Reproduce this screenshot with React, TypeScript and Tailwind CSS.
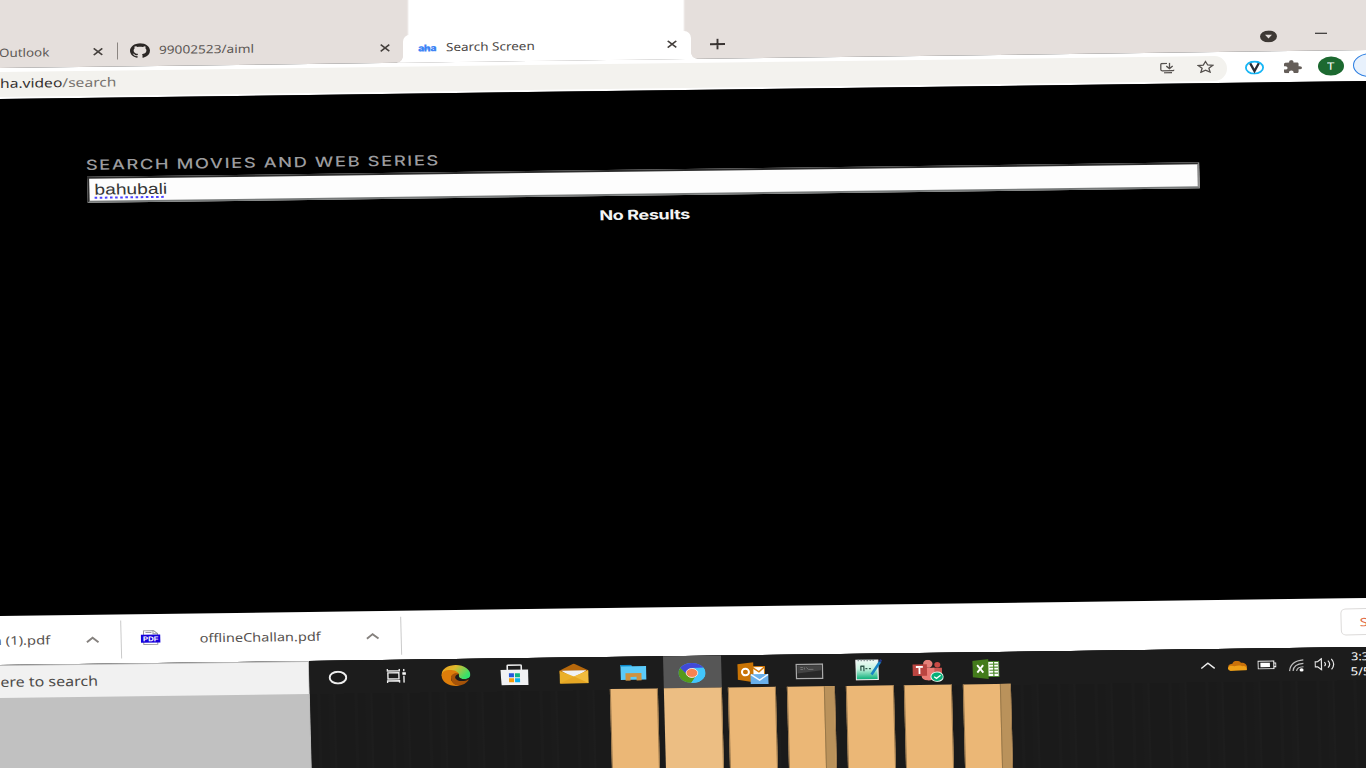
import { useLayoutEffect, useRef, useState } from 'react';
import type { ReactNode } from 'react';

const UI = "font-['Noto_Sans','Open_Sans',sans-serif]";

/** Text stretched horizontally so that it fills exactly `width` pixels. */
function Fit({ width, className = '', children }: { width: number; className?: string; children: ReactNode }) {
  const ref = useRef<HTMLSpanElement>(null);
  const [scale, setScale] = useState(1);
  useLayoutEffect(() => {
    if (ref.current) setScale(width / ref.current.offsetWidth);
  }, [width]);
  return (
    <span className={`block shrink-0 whitespace-nowrap ${className}`} style={{ width }}>
      <span ref={ref} className="inline-block origin-left" style={{ transform: `scaleX(${scale})` }}>
        {children}
      </span>
    </span>
  );
}

function Svg({ box, className, children }: { box: string; className: string; children: ReactNode }) {
  return (
    <svg viewBox={box} preserveAspectRatio="none" fill="none" className={`block shrink-0 ${className}`}>
      {children}
    </svg>
  );
}

function Close({ className = '' }: { className?: string }) {
  return (
    <Svg box="0 0 10 8" className={`h-2 w-2.5 ${className}`}>
      <path d="M.7.7l8.6 6.600M9.300.7L.7 7.300" stroke="#45403d" strokeWidth="1.6" />
    </Svg>
  );
}

function Chevron({ className = '' }: { className?: string }) {
  return (
    <Svg box="0 0 14 8" className={`h-2 w-3.5 ${className}`}>
      <path d="M1.2 6.5L7 2l5.8 4.5" stroke="currentColor" strokeWidth="1.9" />
    </Svg>
  );
}

function TabStrip() {
  return (
    <div className={`flex h-[68px] w-[1400px] items-end bg-[#e5dfdc] text-[11.5px] leading-4 text-[#5c5754] ${UI}`}>
      <div className="flex h-[31px] w-[117px] items-center">
        <Fit width={50} className="-ml-px">Outlook</Fit>
        <Close className="ml-11" />
      </div>
      <div className="flex h-[31px] w-[286px] items-center">
        <div className="h-[17px] w-px shrink-0 bg-[#8b8581]" />
        <Svg box="0 0 16 16" className="ml-3 h-[15px] w-5">
          <path
            fill="#2b2725"
            d="M8 0C3.58 0 0 3.58 0 8c0 3.54 2.29 6.53 5.47 7.59.4.07.55-.17.55-.38 0-.19-.01-.82-.01-1.49-2.01.37-2.53-.49-2.69-.94-.09-.23-.48-.94-.82-1.13-.28-.15-.68-.52-.01-.53.63-.01 1.08.58 1.23.82.72 1.21 1.87.87 2.33.66.07-.52.28-.87.51-1.07-1.78-.2-3.64-.89-3.64-3.95 0-.87.31-1.59.82-2.15-.08-.2-.36-1.02.08-2.12 0 0 .67-.21 2.2.82.64-.18 1.32-.27 2-.27.68 0 1.36.09 2 .27 1.53-1.04 2.2-.82 2.2-.82.44 1.1.16 1.92.08 2.12.51.56.82 1.27.82 2.15 0 3.07-1.87 3.75-3.65 3.95.29.25.54.73.54 1.48 0 1.07-.01 1.93-.01 2.2 0 .21.15.46.55.38A8.01 8.01 0 0 0 16 8c0-4.42-3.58-8-8-8z"
          />
        </Svg>
        <Fit width={95} className="mb-px ml-[9px]">99002523/aiml</Fit>
        <Close className="ml-[126px]" />
      </div>
      <div className="relative flex h-[68px] w-[288px] flex-col">
        <div className="mr-[8px] ml-[6px] h-11 bg-white shadow-[0_0_2px_1px_#fff]" />
        <div className="-mt-1 flex h-7 items-center rounded-t-[7px] bg-white pb-0.5 text-[#4a4644]">
          <Fit width={18} className="mt-0.5 ml-[15px] font-['Inter',sans-serif] text-[9.5px] font-black tracking-tighter text-[#3d84f5]">
            a<span className="line-through decoration-1">h</span>a
          </Fit>
          <Fit width={89} className="ml-2.5">Search Screen</Fit>
          <Close className="ml-[132px]" />
        </div>
        <span className="absolute bottom-0 -left-1.5 size-1.5 bg-[radial-gradient(circle_at_0_0,transparent_5.5px,#fff_6px)]" />
        <span className="absolute -right-1.5 bottom-0 size-1.5 bg-[radial-gradient(circle_at_100%_0,transparent_5.5px,#fff_6px)]" />
      </div>
      <div className="flex h-[31px] flex-1 items-center">
        <Svg box="0 0 15 11" className="mt-px ml-[19px] h-[11px] w-[15px]">
          <path d="M7.5 0v11M0 5.5h15" stroke="#393432" strokeWidth="1.9" />
        </Svg>
        <Svg box="0 0 17 12" className="ml-[535px] h-3 w-[17px]">
          <ellipse cx="8.5" cy="6" rx="8.5" ry="6" fill="#3e3935" />
          <path d="M5 4.3h7L8.5 8z" fill="#e5dfdc" />
        </Svg>
        <div className="mb-1 ml-[38px] h-px w-3 bg-[#111]" />
      </div>
    </div>
  );
}

function Toolbar() {
  return (
    <div className={`flex h-[31px] w-[1400px] items-center bg-white pt-px ${UI}`}>
      <div className="flex h-[25px] w-[1227px] items-center rounded-r-full bg-[#f3f2ee] text-[12.5px] leading-5 text-[#77736f]">
        <Fit width={116}>
          <span className="text-[#34302e]">ha.video</span>/search
        </Fit>
        <Svg box="0 0 15 11" className="mb-0.5 ml-[1044px] h-[11px] w-[15px]">
          <path d="M7 .7H2.2Q.8.7.8 2v4.8Q.8 8 2.2 8h10.6q1 0 1-1M9.5 0v5.5M6.3 3.4l3.2 2.5 3.2-2.5M4 10.1h8" stroke="#55514e" strokeWidth="1.3" />
        </Svg>
        <Svg box="0 0 17 13" className="mb-[3px] ml-[22px] h-[13px] w-[17px]">
          <path d="M8.5 1.3l2.2 3.5 5 .4-3.8 2.8 1.2 4-4.6-2.1L3.9 12l1.2-4L1.3 5.2l5-.4z" stroke="#55514e" strokeWidth="1.3" />
        </Svg>
      </div>
      <Svg box="0 0 19 14" className="mb-px ml-[18px] h-3.5 w-[19px]">
        <ellipse cx="9.5" cy="7" rx="8.6" ry="6.1" fill="#fff" stroke="#16b5f5" strokeWidth="1.8" />
        <path d="M5.2 2.8L9.500 10.5 13.800 2.800" stroke="#292d35" strokeWidth="2.3" />
      </Svg>
      <Svg box="2 1 21 21" className="mb-0.5 ml-[20px] h-[13px] w-[18px]">
        <path
          fill="#655e59"
          d="M20.5 11H19V7c0-1.100-.9-2-2-2h-4V3.500a2.500 2.500 0 0 0-5 0V5H4c-1.100 0-2 .9-2 2v3.800h1.500a2.700 2.700 0 0 1 0 5.400H2V20c0 1.100.9 2 2 2h3.800v-1.500a2.700 2.700 0 0 1 5.400 0V22H17c1.100 0 2-.9 2-2v-4h1.500a2.500 2.500 0 0 0 0-5z"
        />
      </Svg>
      <div className="mb-0.5 ml-4 flex h-[19px] w-[26px] shrink-0 items-center justify-center rounded-[50%] bg-[#1c6930] text-[10px] leading-none text-white">
        <Fit width={8}>T</Fit>
      </div>
      <div className="mb-0.5 ml-[9px] h-6 w-[34px] shrink-0 rounded-[50%] border border-[#2a7de1] bg-[#e8f1fc]" />
    </div>
  );
}

function SearchPage() {
  return (
    <div className="h-[517px] w-[1400px] bg-black">
      <div className="w-[1112px] origin-top-left translate-x-[85px] skew-x-[1.5deg] pt-[58px]">
        <Fit width={354} className="-ml-px font-['Inter',sans-serif] text-[14px] leading-[18px] font-medium tracking-[1.2px] text-[#9c9c9f]">
          SEARCH MOVIES AND WEB SERIES
        </Fit>
        <div className="mt-[3px] flex h-[26px] items-center border-2 border-t-[#2c2c2c] border-r-[#8b8b8b] border-b-[#777a7a] border-l-[#2c2c2c] bg-[#fdfdfd] pl-[5px]">
          <Fit width={73} className="font-['Liberation_Sans',sans-serif] text-[15px] leading-5 text-[#363636]">
            <span className="underline decoration-[#4a42ff] decoration-dotted decoration-2 underline-offset-[2px] [text-decoration-skip-ink:none]">bahubali</span>
          </Fit>
        </div>
        <Fit width={91} className="mt-[9px] ml-[511px] font-['Inter',sans-serif] text-[13.5px] leading-[21px] font-bold tracking-[-0.3px] text-[#f4f4f4]">
          No Results
        </Fit>
      </div>
    </div>
  );
}

function Downloads() {
  return (
    <div className="w-[1400px] bg-white">
      <div className={`flex h-[49px] origin-top-left skew-x-[1.5deg] items-center text-[12px] leading-4 text-[#57524f] ${UI}`}>
        <Fit width={58} className="-ml-2">n (1).pdf</Fit>
        <Chevron className="ml-[35px] text-[#85817e]" />
        <div className="ml-[21px] h-[38px] w-px shrink-0 bg-[#cacaca]" />
        <Svg box="0 0 20 15" className="mb-0.5 ml-[19px] h-[15px] w-5">
          <path d="M3 .6h10l4 3v10.800H3z" fill="#fff" stroke="#9a9aa0" />
          <path d="M5 2.500h6M12.500.8v3H17" stroke="#9a9aa0" />
          <path d="M.2 4.500h19.600v8.200H.2z" fill="#1500dc" />
          <text x="2.300" y="11.200" fontSize="6.800" fontWeight="bold" textLength="15.400" lengthAdjust="spacingAndGlyphs" fill="#fff" fontFamily="Liberation Sans, sans-serif">PDF</text>
        </Svg>
        <Fit width={121} className="ml-[39px]">offlineChallan.pdf</Fit>
        <Chevron className="ml-[45px] text-[#85817e]" />
        <div className="ml-[21px] h-[38px] w-px shrink-0 bg-[#cacaca]" />
        <div className="mb-0.5 ml-[939px] flex h-[27px] w-[90px] shrink-0 items-center rounded-[5px] border border-[#dcdad9] pl-[18px] text-[11.5px] text-[#e06a42]">
          <Fit width={8}>S</Fit>
        </div>
      </div>
    </div>
  );
}

function Cortana() {
  return (
    <Svg box="0 0 19 14" className="mt-px mr-1 h-3.5 w-[19px]">
      <ellipse cx="9.500" cy="7" rx="8.300" ry="5.900" stroke="#eee" strokeWidth="2" />
    </Svg>
  );
}

function TaskView() {
  return (
    <Svg box="0 0 20 14" className="mr-[5px] h-3.5 w-5">
      <path d="M1 0v2h12V0M1 14v-2h12v2M1.500 4h11v6h-11zM17.500 0v2.500M17.500 7v7" stroke="#ededed" strokeWidth="1.400" />
      <path d="M16 3.500h3.500v2.500H16z" fill="#fff" />
    </Svg>
  );
}

function Edge() {
  return (
    <Svg box="0 0 29 21" className="mr-0.5 h-[21px] w-[29px]">
      <defs>
        <linearGradient id="edgeTop" x1="0" y1="0" x2="1" y2=".5">
          <stop stopColor="#f19a16" />
          <stop offset=".45" stopColor="#dfba2e" />
          <stop offset="1" stopColor="#35e26b" />
        </linearGradient>
      </defs>
      <path d="M0 11C0 3 7 0 14.500 0 23 0 29 5 29 9.500c0 4-4 5-8 4.500-3-.3-4.500-1.500-3.500-3.500C18 9 15 6 11 6.500z" fill="url(#edgeTop)" />
      <path d="M0 10C1 5.500 6 4.500 10 5c4.500.5 7.500 2.500 7.800 5C15 7.500 10 9 9.500 13c-.3 4 4 7 8.500 7.800C8 22 0 17 0 10z" fill="#dd7d0a" />
      <path d="M9.500 12.500c0-3 3.500-5 7.800-4-1.800 3 1 7.500 10.200 6.200C24 20 17 22 13 19.500 10.500 18 9.500 15 9.500 12.500z" fill="#a65308" />
      <path d="M17.500 9c-2 .2-4.700 2.200-3.500 4.500 1.600 3 8.500 3.500 13 1.200-4 .3-11-.7-9.500-5.700z" fill="#1c1c1c" />
    </Svg>
  );
}

function Store() {
  return (
    <Svg box="0 0 28 21" className="mr-[3px] h-[21px] w-7">
      <path d="M7 7V1.500Q7 .8 8 .8h12q1 0 1 .7V7" stroke="#eee" strokeWidth="1.600" />
      <path d="M0 5.500h28V21H1z" fill="#f1f1f3" />
      <path d="M8.500 9h5v4h-5z" fill="#2457dd" />
      <path d="M14.500 9h5v4h-5z" fill="#0fb583" />
      <path d="M8.500 14h5v4h-5z" fill="#f59b09" />
      <path d="M14.500 14h5v4h-5z" fill="#08aff2" />
    </Svg>
  );
}

function Mail() {
  return (
    <Svg box="0 0 29 20" className="mr-0.5 h-5 w-[29px]">
      <path d="M0 7L14.500 0 29 7v3H0z" fill="#b5670b" />
      <path d="M2 7h25l-12.500 8z" fill="#eff1f5" />
      <path d="M0 7l14.500 6L29 7v13H0z" fill="#eab02a" />
      <path d="M14.500 13L29 7v13z" fill="#f0bb3d" />
      <path d="M0 20l14.500-7L29 20z" fill="#e6a724" />
    </Svg>
  );
}

function Explorer() {
  return (
    <Svg box="0 0 26 16" className="mr-px h-4 w-[26px]">
      <path d="M0 0h10l2 1.500h14V15H0z" fill="#5bcbfa" />
      <path d="M0 0h10l2 1.500H0z" fill="#0b88c9" />
      <path d="M5 8.500h16V16h-5v-3.800h-6V16H5z" fill="#ce9240" />
    </Svg>
  );
}

function Chrome() {
  return (
    <Svg box="0 0 27 20" className="mt-px mr-px h-5 w-[27px]">
      <ellipse cx="13.500" cy="10" rx="13.500" ry="10" fill="#42c5fb" />
      <path d="M2 4.800A13.500 10 0 0 1 25.200 5H13.500L8 12z" fill="#4149d8" />
      <path d="M2 4.800A13.500 10 0 0 0 12.500 20L18.500 12H9z" fill="#56991a" />
      <path d="M13.500 5h11.700A13.500 10 0 0 1 12.500 20L19 11z" fill="#42c5fb" />
      <ellipse cx="13.500" cy="10" rx="5.800" ry="4.500" fill="#f68250" stroke="#f8e9e3" strokeWidth=".9" />
    </Svg>
  );
}

function Outlook() {
  return (
    <Svg box="0 0 31 22" className="mt-[3px] ml-[3px] h-[22px] w-[31px]">
      <path d="M14 4.500h13V14H14z" fill="#fff" stroke="#d47a08" />
      <path d="M14.500 5l7 4.800L27 5" stroke="#d47a08" strokeWidth="1.500" />
      <path d="M0 1.800L16 0v20L0 17.300z" fill="#c97405" />
      <ellipse cx="8" cy="9.800" rx="3.500" ry="3.300" stroke="#fff" strokeWidth="2" />
      <path d="M13 12h18v10H13z" fill="#69afeb" />
      <path d="M13.500 12.500L22 18l8.500-5.500" stroke="#f4faff" strokeWidth="1.400" />
    </Svg>
  );
}

function Terminal() {
  return (
    <Svg box="0 0 28 16" className="mt-px mr-0.5 h-4 w-7">
      <path d="M.8.8h26.400v14.400H.8z" fill="#292929" stroke="#aaa" strokeWidth="1.400" />
      <path d="M2 2h24v5L2 10z" fill="#444" />
      <path d="M5 4h2.500M5 6h2.500M9 4v2M11 4l2 2h5" stroke="#777" strokeWidth=".9" />
    </Svg>
  );
}

function Editor() {
  return (
    <Svg box="0 0 27 22" className="mr-px h-[22px] w-[27px]">
      <defs>
        <linearGradient id="editorFill" x2="0" y2="1">
          <stop stopColor="#f1faf7" />
          <stop offset=".45" stopColor="#c5f3df" />
          <stop offset="1" stopColor="#05ae76" />
        </linearGradient>
      </defs>
      <path d="M.6 1.500h22v19.500H.6z" fill="url(#editorFill)" stroke="#eee" strokeWidth="1.200" />
      <path d="M3 .5v2M6 .5v2M9 .5v2M12 .5v2M15 .5v2M18 .5v2" stroke="#60797a" />
      <path d="M5.500 7v5M5.500 7.500h3v5M10 10h2M13.500 10h2" stroke="#31574d" strokeWidth="1.300" />
      <path d="M16 16L25 3" stroke="#1785c5" strokeWidth="2.600" />
      <path d="M24.500 3.500L26 1.200" stroke="#233886" strokeWidth="2.400" />
    </Svg>
  );
}

function Teams() {
  return (
    <Svg box="0 0 31 22" className="mt-[3px] ml-px h-[22px] w-[31px]">
      <ellipse cx="15.500" cy="4" rx="4.700" ry="4" fill="#e68079" />
      <ellipse cx="25" cy="5" rx="3" ry="2.700" fill="#c94a45" />
      <path d="M20 8h9.500v7.500Q28 19 22 18z" fill="#cc5752" />
      <path d="M9 8h13v9q-2 4-7 3.500Q9 20 9 16z" fill="#eb7c76" />
      <path d="M0 4.500h14.500V16H0z" fill="#bb4541" />
      <path d="M3.500 7h7M7 7v7" stroke="#fff" strokeWidth="1.800" />
      <ellipse cx="24.500" cy="17" rx="6.200" ry="4.700" fill="#08ae78" stroke="#e9f8f1" />
      <path d="M21.500 17l2.300 1.600 4.200-3" stroke="#fff" strokeWidth="1.300" />
    </Svg>
  );
}

function Excel() {
  return (
    <Svg box="0 0 27 20" className="mt-px mr-0.5 h-5 w-[27px]">
      <path d="M15 2.500h11.500v15H15z" fill="#fff" stroke="#48832b" />
      <path d="M17 5.200h8.500M17 8.200h8.500M17 11.200h8.500M17 14.200h8.500M21.300 3v14" stroke="#528e30" strokeWidth="1.200" />
      <path d="M0 1.800L16 0v20L0 18z" fill="#437b1b" />
      <path d="M4.800 6l6 7.500M10.800 6l-6 7.500" stroke="#fff" strokeWidth="1.900" />
    </Svg>
  );
}

type App = { icon: ReactNode; tile?: 'plain' | 'wide' | 'stacked' };

const apps: App[] = [
  { icon: <Cortana /> },
  { icon: <TaskView /> },
  { icon: <Edge /> },
  { icon: <Store /> },
  { icon: <Mail /> },
  { icon: <Explorer />, tile: 'plain' },
  { icon: <Chrome />, tile: 'wide' },
  { icon: <Outlook />, tile: 'plain' },
  { icon: <Terminal />, tile: 'stacked' },
  { icon: <Editor />, tile: 'plain' },
  { icon: <Teams />, tile: 'plain' },
  { icon: <Excel />, tile: 'stacked' },
];

function Tile({ kind }: { kind: 'plain' | 'wide' | 'stacked' }) {
  if (kind === 'wide') return <div className="h-28 w-[58px] border-r border-[#a58254] bg-[#ecbe83]" />;
  return (
    <div className="flex h-28 w-12 border-x border-[#97764b] bg-[#ebb776]">
      {kind === 'stacked' && <div className="ml-auto w-2.5 border-l border-[#987849] bg-[#ba925b]" />}
    </div>
  );
}

function Tray() {
  return (
    <div className="flex h-8 items-center text-white">
      <Svg box="0 0 15 7" className="h-[7px] w-[15px]">
        <path d="M.8 6.300l6.700-5.300 6.700 5.300" stroke="#ededed" strokeWidth="1.400" />
      </Svg>
      <Svg box="0 0 20 10" className="mt-px ml-3 h-2.5 w-5">
        <path d="M1 7C0 4 3 3 5 3 6-1 12-.5 13.500 2 17 1.500 20 4 19.500 7z" fill="#c9710a" />
        <path d="M.5 7C1 4.500 5 4.500 7 5.500c4-1.500 7-.5 8 0 3-1 5.500 2 4 4L3 10Q0 9.500.5 7z" fill="#eea018" />
      </Svg>
      <Svg box="0 0 19 9" className="mt-px ml-2.5 h-[9px] w-[19px]">
        <path d="M.6.600h15.800v7.800H.6zM17 2.700h1.500v3.600H17" stroke="#f2f2f2" strokeWidth="1.100" />
        <path d="M3 2.300h9.500v4.400H3z" fill="#fff" />
      </Svg>
      <Svg box="0 0 16 13" className="mt-0.5 ml-3 h-[13px] w-4">
        <path d="M1 12Q2 2 15 1M4.500 12Q5 5 15 4.500M8 12q.5-4 7-4.200" stroke="#bdbdbd" strokeWidth="1.200" />
        <ellipse cx="13" cy="11" rx="2" ry="1.600" fill="#fff" />
      </Svg>
      <Svg box="0 0 21 13" className="ml-2.5 h-[13px] w-[21px]">
        <path d="M.7 4h2.500L7 1v11L3.200 9H.7zM10 4.500q2 2 0 4M13.500 3q3.500 3.500 0 7M17 1.200q4.500 5.300 0 10.600" stroke="#e8e8e8" strokeWidth="1.200" />
      </Svg>
      <div className={`ml-[15px] shrink-0 text-[11px] leading-[15px] ${UI}`}>
        <Fit width={18} className="ml-px">3:3</Fit>
        <Fit width={20}>5/5</Fit>
      </div>
    </div>
  );
}

function Taskbar() {
  return (
    <div className="w-[1420px] bg-[#1c1c1c]">
      <div className="flex h-36 origin-top-left skew-x-[1.5deg] bg-[#1c1c1c]">
        <div className="-ml-3 w-[321px] shrink-0 border-t border-r border-[#b8b8b8] bg-[#c1c1c1]">
          <div className={`flex h-8 items-center bg-[#f1f1f1] pl-3 text-[13.5px] leading-5 text-[#4d4b49] ${UI}`}>
            <Fit width={97}>ere to search</Fit>
          </div>
        </div>
        <div className="flex flex-1 bg-[linear-gradient(#1c1c1c_33px,transparent_33px),repeating-linear-gradient(90deg,#1a1a1a_0_7px,#1c1c1c_8px_10px,#1a1a1a_11px_18px,#1b1b1b_19px_23px,#1d1d1d_24px_25px,#1a1a1a_26px_37px)] pl-px">
          {apps.map((app, i) => (
            <div key={i} className="flex w-[58.8px] shrink-0 flex-col items-center">
              <div className={`flex h-8 w-[58px] shrink-0 items-center justify-center ${app.tile === 'wide' ? 'bg-[#565656]' : ''}`}>
                {app.icon}
              </div>
              {app.tile && <Tile kind={app.tile} />}
            </div>
          ))}
          <div className="ml-[184px]">
            <Tray />
          </div>
        </div>
      </div>
    </div>
  );
}

export default function App() {
  return (
    <div className="h-[768px] w-[1366px] overflow-hidden bg-[#1c1c1c]">
      <div className="flex origin-top-left skew-y-[-0.75deg] flex-col">
        <TabStrip />
        <Toolbar />
        <SearchPage />
        <Downloads />
        <Taskbar />
      </div>
    </div>
  );
}
